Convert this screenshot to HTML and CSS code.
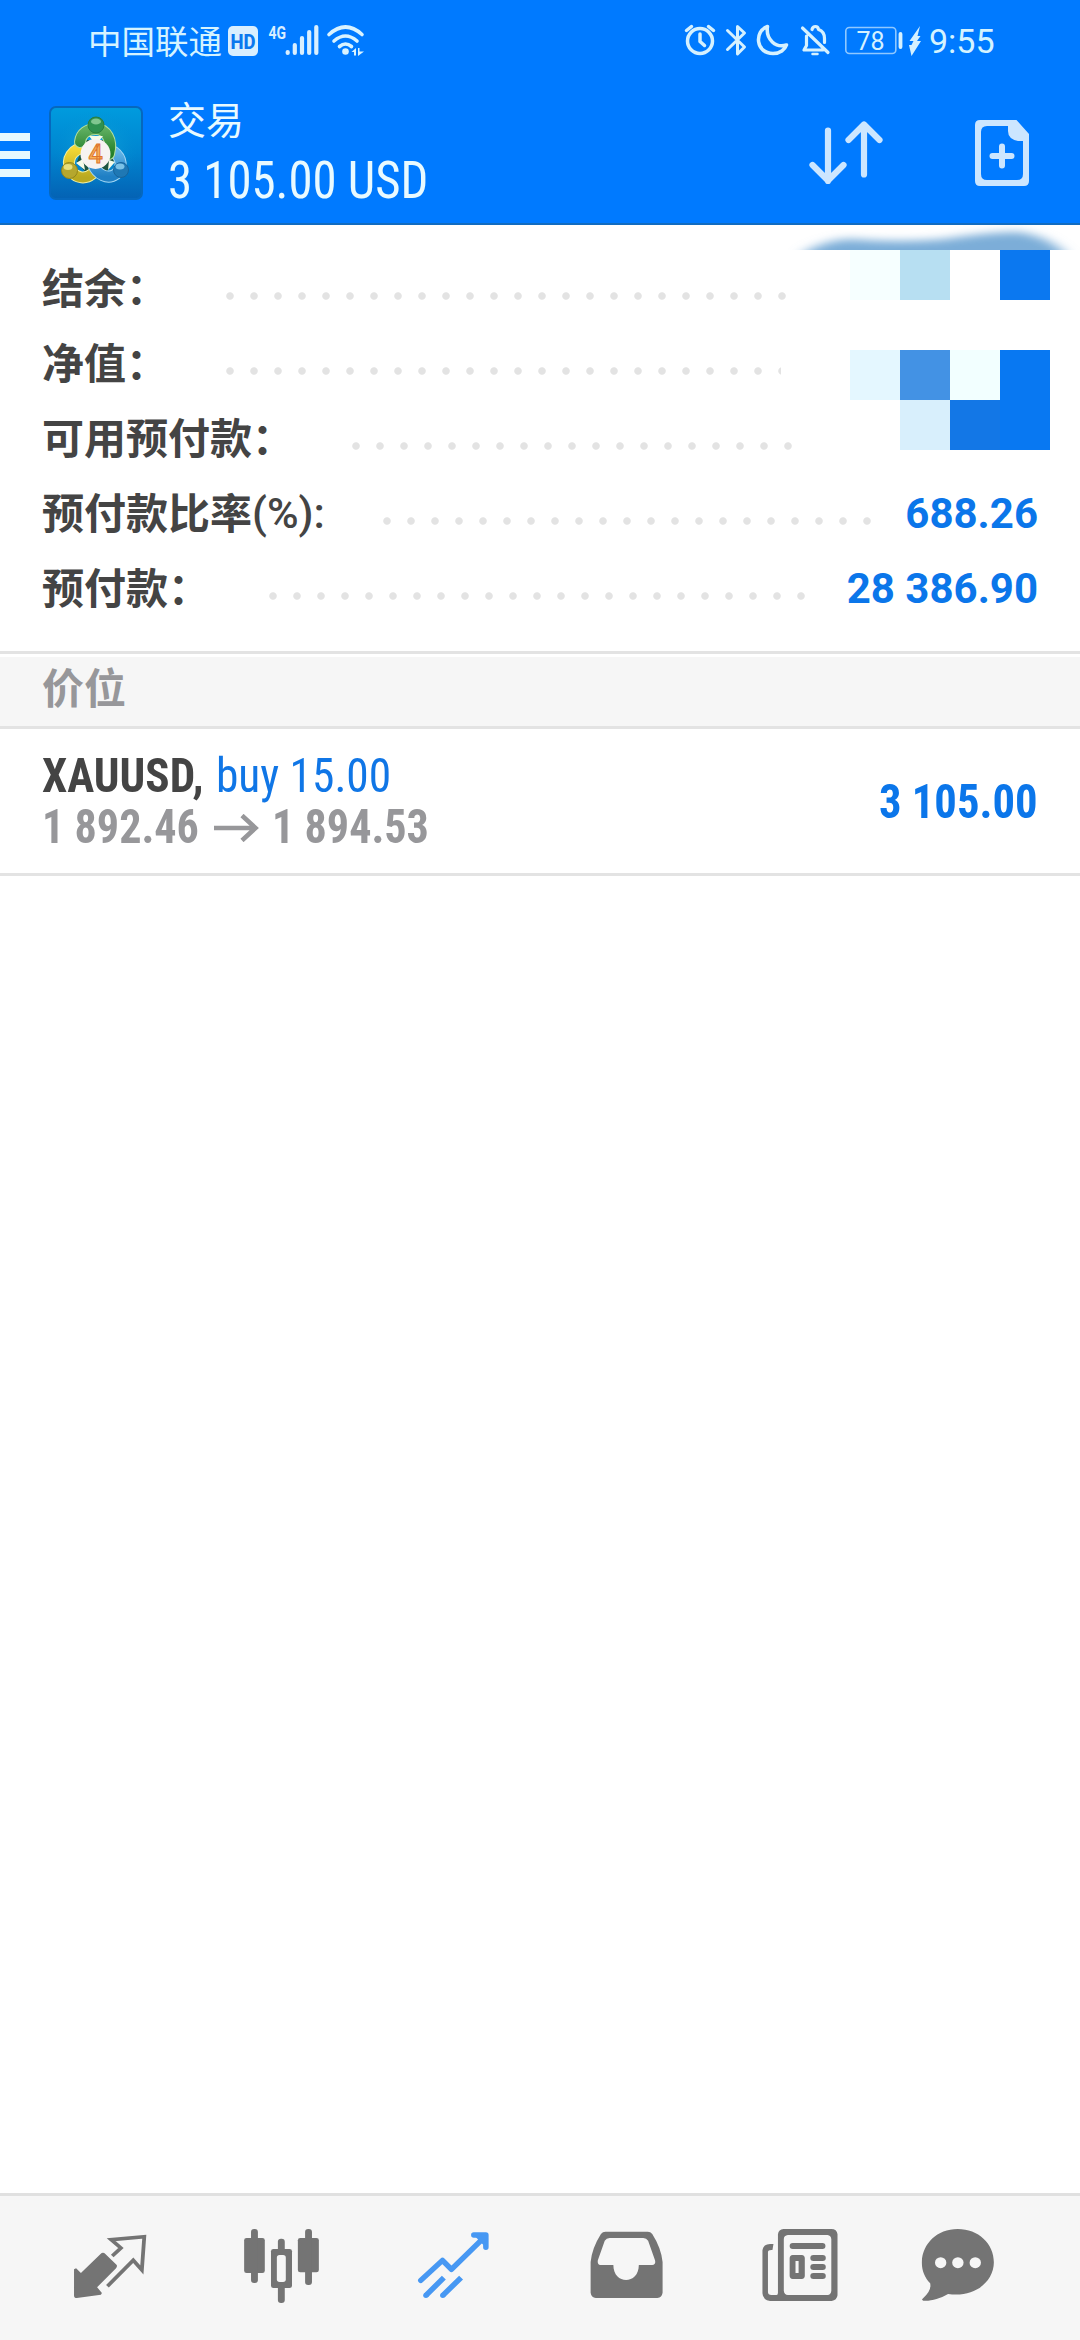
FILE: index.html
```html
<!DOCTYPE html>
<html lang="zh-CN">
<head>
<meta charset="utf-8">
<title>交易</title>
<link rel="stylesheet" href="styles.css">
</head>
<body>
<div class="app">
  <header class="header">
    <div class="status">
      <span class="carrier">中国联通</span>
      <svg class="status-left" viewBox="225 0 145 82" width="145" height="82">
        <rect x="228" y="26" width="30" height="30" rx="5" fill="#d9efff"/>
        <text x="230.500" y="48.500" class="hd" textLength="25" lengthAdjust="spacingAndGlyphs">HD</text>
        <text x="268.500" y="39" class="net" textLength="17.500" lengthAdjust="spacingAndGlyphs">4G</text>
        <g stroke="#d9efff" stroke-width="4.200" stroke-linecap="round">
          <path d="M287.700 52v1M294.800 45v8M302 38v15M309.200 32v21M316.300 27v26"/>
        </g>
        <g fill="none" stroke="#d9f3ff" stroke-width="3.600" stroke-linecap="round">
          <path d="M329 34.500Q345.500 19.500 362 34.500M334 41Q345.500 31 357 41M339.500 46.500Q345.500 41.500 351.500 46.500"/>
        </g>
        <circle cx="345.500" cy="51.500" r="3.300" fill="#d9f3ff"/>
        <path d="M351.500 52l4.500-4v7.500h-2v-3.500zM358 48h1.500v3.500h4.500l-6 4.500z" fill="#d9f3ff"/>
      </svg>
      <svg class="status-right" viewBox="680 0 246 82" width="246" height="82">
        <g fill="none" stroke="#d5f1ff" stroke-width="3.500" stroke-linecap="round" stroke-linejoin="round">
          <circle cx="700" cy="41" r="12.500"/>
          <path d="M700 34v7.500l4.500 4M686.500 30.500l5-4M713.500 30.500l-5-4"/>
          <path d="M727.500 30.500l17 16.500-7 7V26.500l7 6.500-17 16.500" stroke-width="3"/>
          <path d="M767.500 26.500C754 31 755.500 53.500 773 53.500C780 53.500 785 49.500 786.500 45C776 48.500 765.500 39.500 767.500 26.500z"/>
          <path d="M802.500 28L828 52.500M806.500 36v9.500l-2.500 4.500h19M812 29.500c1-4 6-4 6.500 0 4.500 1.500 6 5 6 9v4" stroke-width="3.200"/>
          <path d="M812.500 54h5" stroke-width="2.500"/>
          <rect x="845.800" y="27.500" width="50" height="26" rx="3.500" stroke="#8fc8ff" stroke-width="1.600"/>
          <path d="M900.500 34v13" stroke-width="3.800"/>
        </g>
        <path d="M920 26l-10.500 15h4l-2 4h-2.500l2.500 11 9.500-15h-4l3.500-5h-3z" fill="#d5f1ff"/>
        <text x="856.500" y="49.500" class="battery">78</text>
      </svg>
      <span class="clock">9:55</span>
    </div>
    <div class="toolbar">
      <span class="menu"><i></i><i></i><i></i></span>
      <svg class="logo" viewBox="0 0 94 94" width="94" height="94">
        <defs>
          <linearGradient id="bg" x1="0" y1="0" x2="0" y2="1"><stop offset="0" stop-color="#009bde"/><stop offset=".5" stop-color="#0085d0"/><stop offset="1" stop-color="#0462b4"/></linearGradient>
          <radialGradient id="glow"><stop offset="0" stop-color="#25b7e4" stop-opacity=".7"/><stop offset="1" stop-color="#0090d0" stop-opacity="0"/></radialGradient>
          <linearGradient id="green" x1="0" y1="0" x2="0" y2="1"><stop offset="0" stop-color="#5fae60"/><stop offset="1" stop-color="#237f2a"/></linearGradient>
          <linearGradient id="gold" x1="0" y1="0" x2="0" y2="1"><stop offset="0" stop-color="#f6d935"/><stop offset="1" stop-color="#b9a920"/></linearGradient>
          <linearGradient id="blue" x1="0" y1="0" x2="0" y2="1"><stop offset="0" stop-color="#62b4e6"/><stop offset="1" stop-color="#1f7fc4"/></linearGradient>
        </defs>
        <rect x="1" y="1" width="92" height="92" rx="6" fill="url(#bg)" stroke="#0668bd" stroke-width="2"/>
        <ellipse cx="47" cy="44" rx="42" ry="40" fill="url(#glow)"/>
        <path d="M36 34h22l8 20-10 14H38L28 56z" fill="#1c5540"/>
        <g fill="none" stroke-linecap="round">
          <path d="M36 42C24 42 16 53 22 65C28 73 37 73 43 68" stroke="#f3efa0" stroke-width="12"/>
          <path d="M36 42C24 42 16 53 22 65C28 73 37 73 43 68" stroke="url(#gold)" stroke-width="10"/>
          <path d="M65 46C73 52 74 62 67 68C59 74 48 69 44 58" stroke="#a5d8f5" stroke-width="12"/>
          <path d="M65 46C73 52 74 62 67 68C59 74 48 69 44 58" stroke="url(#blue)" stroke-width="10"/>
          <path d="M31 36C32 27 39 23 47 23C57 23 64 34 60 48" stroke="#b5e0a0" stroke-width="12"/>
          <path d="M31 36C32 27 39 23 47 23C57 23 64 34 60 48" stroke="url(#green)" stroke-width="10"/>
        </g>
        <path d="M40 30h14l-4 5h-6zM27 57l7-4 2 11zM60 54l6 2-7 8z" fill="#f4fbe9"/>
        <circle cx="47" cy="19" r="8" fill="#2f9150" stroke="#2b7d3b"/>
        <ellipse cx="47" cy="15.500" rx="5" ry="3" fill="#80c690"/>
        <circle cx="20.500" cy="64.500" r="8" fill="#b5a72e" stroke="#92861b"/>
        <ellipse cx="19" cy="61" rx="4.500" ry="3" fill="#e8df7c"/>
        <circle cx="72" cy="64" r="7.500" fill="#1f78b4" stroke="#17649c"/>
        <ellipse cx="71" cy="60.500" rx="4.500" ry="3" fill="#7cc2e6"/>
        <circle cx="46.500" cy="48" r="15" fill="#f6f3f1"/>
        <text x="46.500" y="57" class="logo-digit">4</text>
      </svg>
      <div class="heading">
        <span class="title">交易</span>
        <span class="total cond">3 105.00 USD</span>
      </div>
      <svg class="actions" viewBox="800 82 240 141" width="240" height="141">
        <path d="M828 130.500V181M812.500 165L828 180.500L843.500 165M864 174.500V124.500M848.500 140L864 124.500L879.500 140" fill="none" stroke="#cce6ff" stroke-width="6.200" stroke-linecap="round" stroke-linejoin="round"/>
        <path fill-rule="evenodd" d="M980 120h36.500l12.500 14v47q0 5-5 5h-44q-5 0-5-5v-56q0-5 5-5zM987 126q-6 0-6 6v42q0 6 6 6h30q6 0 6-6V141h-5q-10-2-10-10v-5z" fill="#cce6ff"/>
        <path d="M992.500 156h19M1002 146.500v19" stroke="#cce6ff" stroke-width="6" stroke-linecap="round"/>
      </svg>
    </div>
  </header>

  <section class="summary">
    <div class="row"><span class="label">结余：</span><span class="dots dots-a"></span></div>
    <div class="row"><span class="label">净值：</span><span class="dots dots-b"></span></div>
    <div class="row"><span class="label">可用预付款：</span><span class="dots dots-c"></span></div>
    <div class="row"><span class="label">预付款比率</span><span class="ratio">(%):</span><span class="dots dots-d"></span><span class="value">688.26</span></div>
    <div class="row"><span class="label">预付款：</span><span class="dots dots-e"></span><span class="value">28 386.90</span></div>
    <svg class="mosaic" viewBox="780 225 300 240" width="300" height="240">
      <defs>
        <filter id="soft" x="-10%" y="-60%" width="120%" height="220%"><feGaussianBlur stdDeviation="7 4"/></filter>
        <clipPath id="cut"><rect x="780" y="225" width="300" height="25"/></clipPath>
      </defs>
      <g clip-path="url(#cut)"><path d="M802 254Q824 240 850 239Q900 243 945 239Q990 232 1018 232Q1048 236 1066 254V262H802z" fill="#7badd8" filter="url(#soft)"/></g>
      <rect x="850" y="250" width="50" height="50" fill="#f6ffff"/>
      <rect x="900" y="250" width="50" height="50" fill="#b7dff2"/>
      <rect x="1000" y="250" width="50" height="50" fill="#0b78f0"/>
      <rect x="850" y="350" width="50" height="50" fill="#e4f7ff"/>
      <rect x="900" y="350" width="50" height="50" fill="#4392e4"/>
      <rect x="950" y="350" width="50" height="50" fill="#f2ffff"/>
      <rect x="1000" y="350" width="50" height="100" fill="#0878f2"/>
      <rect x="900" y="400" width="50" height="50" fill="#d8effc"/>
      <rect x="950" y="400" width="50" height="50" fill="#1377e6"/>
    </svg>
  </section>

  <h2 class="section-title">价位</h2>

  <section class="position">
    <div class="details">
      <div class="line"><span class="symbol cond">XAUUSD,</span><span class="side cond">buy 15.00</span></div>
      <div class="line prices"><span class="price cond">1 892.46</span>
        <svg class="arrow" viewBox="0 0 46 28" width="46" height="28"><path d="M0 14h41M28 1.500L41.500 14L28 26.500" fill="none" stroke="#97979a" stroke-width="4.600"/></svg>
        <span class="price cond">1 894.53</span></div>
    </div>
    <span class="profit cond">3 105.00</span>
  </section>

  <main class="blank"></main>

  <nav class="nav">
    <svg viewBox="145.200 48 348.500 432" preserveAspectRatio="none"><g>
      <path d="M215 268L221 265L235 279L292 222Q299 215 306 222L339 255Q341 260 337 265L282 322L296 339L293 344L223 354Q215 354 215 347z" fill="#747474"/>
      <path d="M326 228L351 204L323 179L419 170L412 270L387 241L312 319" fill="none" stroke="#747474" stroke-width="11"/></g></svg>
    <svg viewBox="644.700 48 348.500 432" preserveAspectRatio="none">
      <g fill="#747474"><rect x="709" y="174" width="60" height="105" rx="7"/><rect x="865" y="174" width="61" height="103" rx="7"/><rect x="729" y="147" width="20" height="162" rx="9"/><rect x="886" y="147" width="20" height="168" rx="9"/><rect x="807" y="176" width="20" height="193" rx="9"/><rect x="787" y="207" width="61" height="117" rx="7"/></g>
      <rect x="804" y="225" width="26" height="81" rx="8" fill="#f6f6f6"/></svg>
    <svg viewBox="1144.200 48 348.500 432" preserveAspectRatio="none">
      <g fill="none" stroke="#4798f3" stroke-width="16" stroke-linejoin="round"><path d="M1222 301L1285 241L1311 268L1409 169M1376 165H1411V202" stroke-linecap="round"/><path d="M1237 346L1289 293M1286 346L1339 293"/></g>
      <path d="M1376 165h35v37l-16-16z" fill="#4798f3"/><g fill="#4798f3"><circle cx="1237" cy="346" r="8"/><circle cx="1286" cy="346" r="8"/></g></svg>
    <svg viewBox="78.400 48 348.500 432" preserveAspectRatio="none">
      <path fill-rule="evenodd" d="M190 155H313Q321 155 326 162Q352 204 356 246V338Q354 352 341 354H162Q149 352 147 338V246Q151 204 177 162Q182 155 190 155zM202 174Q193 174 188 182L168 241Q166 254 175 255H213C213 315 287 315 287 255H326Q337 254 334 241L314 182Q309 174 300 174z" fill="#747474"/></svg>
    <svg viewBox="580.800 48 348.500 432" preserveAspectRatio="none">
      <path fill-rule="evenodd" d="M707 147H846Q862 147 864 163V346Q862 361 847 363H668Q648 361 646 340V211Q649 192 668 192H678L675 210Q662 209 662 216V336Q662 345 672 345H687Q691 345 691 338V163Q693 148 707 147zM720 165Q708 166 708 178V332Q709 344 720 345H835Q845 344 846 332V178Q845 166 835 165z" fill="#747474"/>
      <path fill-rule="evenodd" d="M734 225h26q9 1 9 10v52q0 9-9 10h-26q-9-1-9-10v-52q0-9 9-10zM742 243v36h9v-36z" fill="#747474"/>
      <g fill="#747474"><rect x="725" y="189" width="104" height="18" rx="9"/><rect x="785" y="225" width="45" height="18" rx="9"/><rect x="785" y="252" width="45" height="18" rx="9"/><rect x="785" y="279" width="45" height="18" rx="9"/></g></svg>
    <svg viewBox="1039.600 48 348.500 432" preserveAspectRatio="none">
      <path d="M1213 147C1273 147 1318 191 1318 247C1318 306 1261 354 1185 342C1160 357 1134 364 1113 362Q1107 359 1111 356Q1138 332 1133 310C1117 292 1108 270 1109 245C1111 191 1153 147 1213 147z" fill="#747474"/>
      <g fill="#f6f6f6"><circle cx="1163.500" cy="248" r="16.500"/><circle cx="1213.500" cy="248" r="16.500"/><circle cx="1264" cy="248" r="16.500"/></g></svg>
  </nav>
</div>
</body>
</html>
```
FILE: styles.css
```css
* { box-sizing: border-box; }
body { margin: 0; background: #fff; font-family: Roboto, "Noto Sans CJK SC", sans-serif; }
.app { width: 1080px; height: 2340px; display: flex; flex-direction: column; overflow: hidden; background: #fff; }
svg { display: block; flex: none; }
.cond { display: block; flex: none; white-space: nowrap; font-stretch: 75%; transform-origin: 0 50%; }

.header { height: 225px; flex: none; background: #007aff; border-bottom: 2px solid #126cc0; }
.status { height: 82px; display: flex; padding-left: 88px; color: #d5f3ff; line-height: 82px; white-space: nowrap; }
.carrier { width: 137px; font-family: "Noto Sans CJK SC", sans-serif; font-size: 33.500px; font-weight: 400; line-height: 80px; }
.status-right { margin-left: 310px; }
.clock { font-size: 34px; margin-left: 3px; }
.hd { font: 800 21px Roboto, sans-serif; fill: #0b78ee; }
.net { font: 700 19px Roboto, sans-serif; fill: #d9efff; }
.battery { font: 400 25px Roboto, sans-serif; fill: #d5f1ff; }

.toolbar { height: 141px; display: flex; }
.menu { width: 30px; margin-right: 19px; padding-top: 51px; display: flex; flex-direction: column; gap: 10px; flex: none; }
.menu i { height: 8px; background: #e6f8ff; }
.logo { margin-top: 24px; }
.logo-digit { font: 500 25px Roboto, sans-serif; fill: #f7b25a; stroke: #de762e; stroke-width: 1px; text-anchor: middle; }
.heading { width: 657px; flex: none; padding: 11px 0 0 25px; display: flex; flex-direction: column; color: #e9faff; }
.title { font-size: 38px; line-height: 56px; }
.total { width: 280px; font-size: 51px; line-height: 64px; transform: scaleX(.957); }

.summary { position: relative; height: 429px; flex: none; padding: 25px 42px 0; border-bottom: 3px solid #e3e3e3; }
.row { height: 75px; display: flex; align-items: center; }
.label { color: #444; font-size: 42px; font-weight: 700; line-height: 62px; margin-top: -4px; font-family: "Noto Sans CJK SC", sans-serif; white-space: nowrap; }
.ratio { color: #444; font-size: 43px; font-weight: 500; line-height: 62px; }
.dots { height: 8px; margin: 16px 0 0 auto; background: radial-gradient(circle at 4px 4px, #e3e3e3 3.300px, transparent 4.200px) 0 0 / 24px 8px repeat-x; flex: none; }
.dots-a { width: 560px; margin-right: 252px; }
.dots-b { width: 555px; margin-right: 257px; }
.dots-c { width: 440px; margin-right: 246px; }
.dots-d { width: 488px; margin-right: 34px; }
.dots-e { width: 536px; margin-right: 42px; }
.value { color: #0b76ea; font-size: 42px; font-weight: 700; line-height: 62px; margin-top: 2px; }
.mosaic { position: absolute; top: 0; right: 0; }

.section-title { margin: 3px 0 0; height: 72px; flex: none; padding-left: 42px; background: #f6f6f6; border-bottom: 3px solid #e3e3e3; color: #97979a; font: 700 42px/57px "Noto Sans CJK SC", sans-serif; }

.position { height: 147px; flex: none; padding: 20px 42px 0; display: flex; justify-content: space-between; border-bottom: 3px solid #e3e3e3; font-size: 48px; }
.line { display: flex; height: 51px; line-height: 54px; }
.symbol { color: #444; font-weight: 700; width: 174px; transform: scaleX(.94); }
.side { color: #1076e6; transform: scaleX(.945); }
.prices { color: #97979a; font-weight: 700; }
.price { transform: scaleX(.92); }
.prices .price:first-child { width: 172px; }
.arrow { margin: 14px 12px 0 0; }
.profit { color: #0b76ea; font-weight: 700; line-height: 105px; transform: scaleX(.93); transform-origin: 100% 50%; }

.blank { flex: 1; }
.nav { height: 147px; flex: none; display: grid; grid-template-columns: 172px 172px 173px 173px 158px 120px; padding-left: 50px; background: #f6f6f6; border-top: 3px solid #e0e0e0; }
.nav svg { width: 120px; height: 144px; }
```
